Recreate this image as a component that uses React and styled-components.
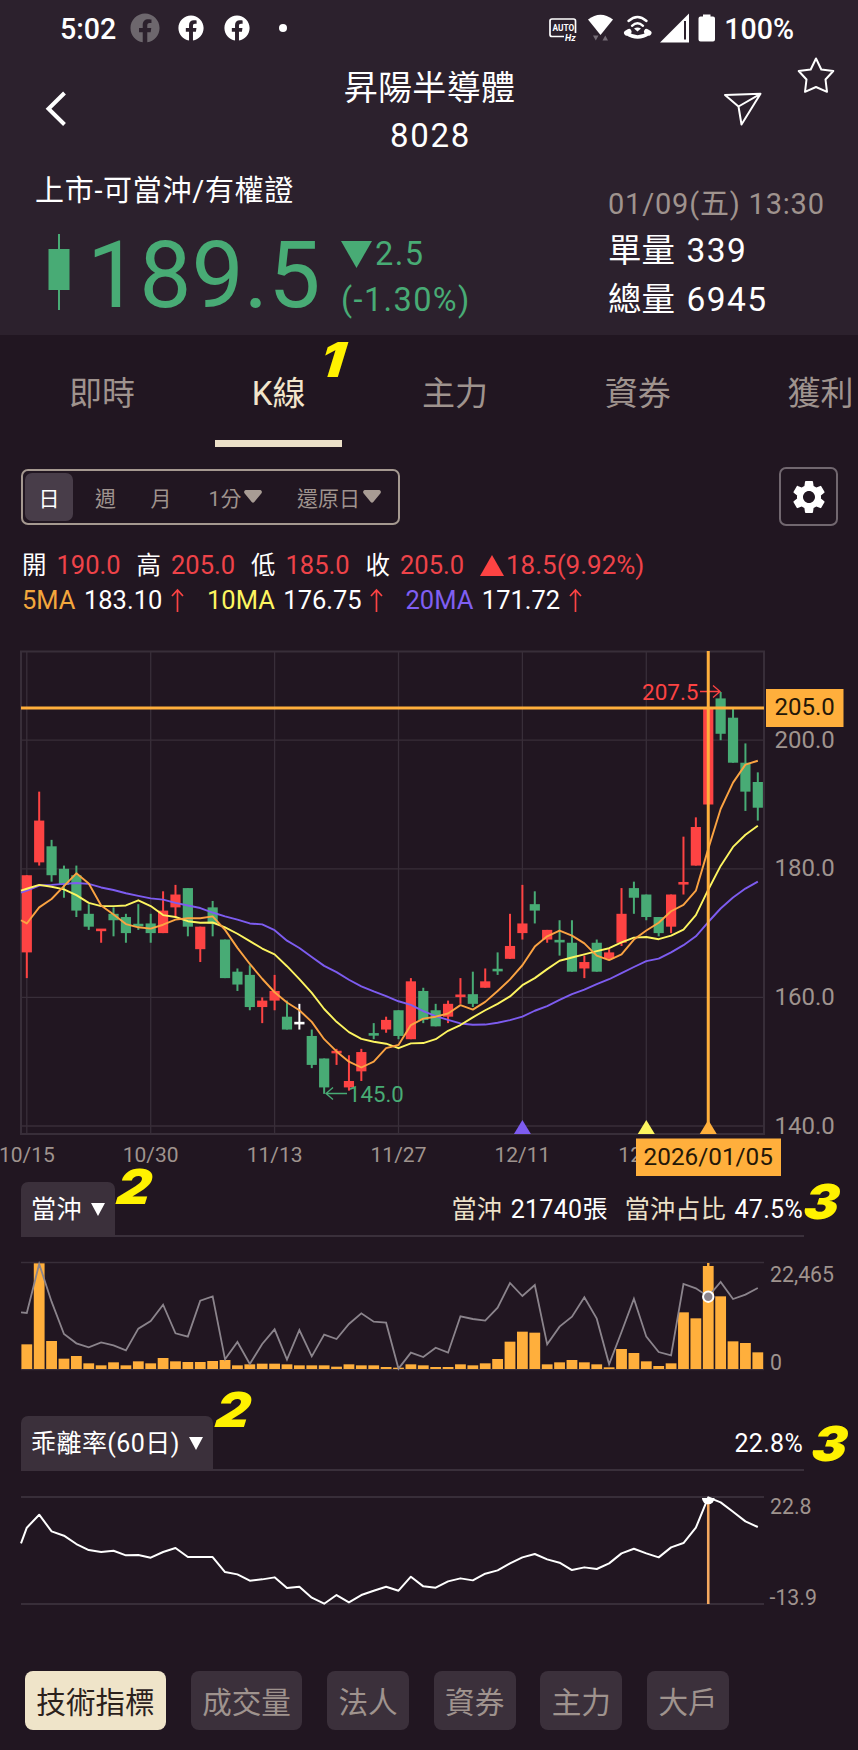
import styled, { createGlobalStyle } from "styled-components";
import { useState } from "react";
import { FaFacebook } from "react-icons/fa";
import { MdSettings } from "react-icons/md";

const RED = "#fd4343";
const GREEN = "#48ab75";
const ORANGE = "#ffaf3c";
const YELLOW = "#fdf560";
const PURPLE = "#7d5cf0";
const GREY = "#9f938e";

// [high, body top, body bottom, low, direction]
const CANDLES = [
    [179, 179, 167, 163, "r"], [192, 187.5, 181, 180.5, "r"], [184.5, 183.5, 179, 178, "g"],
    [180.5, 180, 177.5, 175.5, "g"], [180.5, 179, 173.5, 172.5, "g"], [174.5, 173, 171, 170.5, "g"],
    [170.5, 170.5, 170.5, 168.5, "r"], [174, 173, 172, 169.5, "g"], [173, 172.5, 170, 168.5, "g"],
    [174.5, 171.5, 171, 170.5, "g"], [173, 171.5, 170, 168.5, "g"], [176.5, 173.5, 170, 170, "r"],
    [177.5, 176, 174, 172.5, "r"], [177, 177, 171, 169.5, "g"], [171, 171, 167.5, 165.5, "r"],
    [175, 174, 171.5, 169.5, "g"], [169, 169, 163, 163, "g"], [164.5, 164, 162, 161, "g"],
    [165, 163.5, 158.5, 158, "g"], [160, 159.5, 158.5, 156, "r"], [163.5, 161, 159.5, 158, "r"],
    [159.5, 157, 155, 155, "g"], [159, 156, 156, 155, "w"], [155, 154, 149.5, 149, "g"],
    [150.5, 150.5, 146, 145, "g"], [152, 151.5, 151.5, 149.5, "r"], [151, 147, 146, 145.5, "r"],
    [152, 151.5, 148.5, 147, "r"], [156, 154.5, 154, 153.5, "g"], [157, 156.5, 155, 154.5, "r"],
    [158, 158, 154, 153.5, "g"], [163, 162.5, 153.5, 153.5, "r"], [161.5, 161, 156.5, 156, "g"],
    [159, 158, 155.5, 155.5, "g"], [159.5, 159, 157, 156, "r"], [163, 160.5, 160, 159, "r"],
    [164, 160.5, 159, 158.5, "g"], [164.5, 162.5, 161.5, 161.5, "r"], [167, 164.5, 164, 163.5, "g"],
    [173, 168, 166, 166, "r"], [177.5, 171.5, 170, 169, "r"], [176.5, 174.5, 173.5, 171.5, "g"],
    [170.5, 170.5, 169, 168.5, "r"], [172, 169, 168.5, 166.5, "g"], [172, 168.5, 164, 164, "g"],
    [166.5, 165.5, 164.5, 163, "r"], [169, 168.5, 164, 164, "g"], [167.5, 167, 166, 166, "r"],
    [177, 173, 168.5, 168, "r"], [178, 177, 175.5, 173, "g"], [176, 176, 172.5, 172, "g"],
    [172.5, 172.5, 170, 169.5, "g"], [176, 176, 171, 170, "r"], [185, 178, 177.5, 176, "r"],
    [188, 186.5, 180.5, 180.5, "r"], [205, 205, 190, 190, "r"], [207.5, 206.5, 201, 200, "g"],
    [205, 203.5, 196.5, 196.5, "g"], [199.5, 196.5, 192, 189, "g"], [195, 193.5, 189.5, 187.5, "g"],
];

// averages that depend on days before the first candle; entry 0 is the left edge
const MA5_START = [172, 171.5, 174, 175.3, 177.3];
const MA10_START = [176.6, 176.9, 177.5, 177.2, 176.8, 175.9, 174.7, 174.2, 174.2, 174.3];
const MA20_START = [
    176.3, 176.6, 177.4, 177.5, 177.65, 177.8, 177.65, 177.1, 176.7, 176.2, 175.8,
    175.4, 175.2, 174.7, 174.3, 173.9, 173.2, 172.6, 172.1, 171.5,
];

const DAY_TRADE = [
    74, 317, 84, 31, 39, 17, 11, 20, 11, 23, 17, 33, 23, 21, 21, 24, 27, 11, 14, 16,
    16, 14, 11, 11, 11, 7, 14, 11, 11, 6, 4, 14, 11, 6, 6, 14, 11, 17, 30, 82,
    112, 109, 14, 20, 27, 20, 14, 5, 60, 48, 23, 9, 17, 170, 152, 309, 218, 83, 78, 50,
];

const DAY_TRADE_RATIO = [
    170, 168, 315, 202, 105, 77, 65, 80, 71, 56, 121, 144, 193, 107, 97, 205, 218, 29, 81, 15, 75,
    119, 28, 117, 38, 103, 90, 135, 167, 142, 139, 1, 49, 36, 64, 49, 158, 150, 145, 184, 258,
    219, 252, 74, 127, 157, 215, 151, 14, 111, 211, 97, 51, 41, 255, 242, 217, 261, 210, 223, 243,
];

const BIAS = [
    181, 228, 267, 217, 204, 179, 161, 155, 159, 145, 146, 138, 155, 167, 140, 140, 140, 95, 88, 69, 73,
    79, 47, 51, 18, 0, 26, 4, 26, 39, 51, 39, 81, 52, 48, 67, 76, 70, 90, 100, 121,
    139, 149, 133, 123, 101, 109, 104, 121, 151, 165, 151, 139, 169, 182, 228, 319, 304, 276, 247, 230,
];

const LEFT = 21;
const RIGHT = 764;
const dayX = (i) => 26.8 + 12.39 * i;
const priceY = (p) => 100.2 + (200 - p) * 6.43;
const CURSOR = dayX(55);

const average = (days, start) => {
    const closes = CANDLES.map((c) => (c[4] === "r" ? c[1] : c[2]));
    const out = [...start];
    for (let i = days - 1; i < closes.length; i++) {
        out.push(closes.slice(i - days + 1, i + 1).reduce((a, b) => a + b, 0) / days);
    }
    return out;
};

const toPoints = (values, scale) =>
    values.map((v, i) => `${i === 0 ? LEFT : dayX(i - 1)},${scale(v)}`).join(" ");

const StatusIcons = () => (
    <svg width="170" height="34" viewBox="546 10 170 34" fill="#fff">
        <path d="M563 35.5H551a2 2 0 0 1-2-2V20a2 2 0 0 1 2-2h21.500a2 2 0 0 1 2 2v12" fill="none" stroke="#fff" strokeWidth="1.7" />
        <StatusText x="551.500" y="30" fontSize="8.300">AUTO</StatusText>
        <StatusText x="564" y="39.500" fontSize="9" fontStyle="italic">Hz</StatusText>
        <path d="M587 18.500q12.500-9.500 25 0L599.500 34z" />
        <path d="M592 34.500h5.500l-2.700 5zM601.500 39.500h5.500l-2.700-5z" fill="#756d76" />
        <g fill="none" stroke="#fff" strokeLinecap="round">
            <path d="M627.500 20q9-8 18 0M631 24.800q5.500-5 11 0" strokeWidth="2.400" />
            <path d="M625.500 32q11 8 22.500 0" strokeWidth="3.500" />
            <path d="M625.500 32l2.500-1.500M648 32l-2.500-1.500" strokeWidth="5" />
        </g>
        <path d="M633 27.500q3.500-2 7 0l-3.500 3z" />
        <path d="M659 41.500L688 12.500V41.500z" />
        <path d="M684 20v18.500" stroke="#2c212d" strokeWidth="2" />
        <path d="M702 13.500h7.500v2h2.500a2 2 0 0 1 2 2v21a2 2 0 0 1-2 2h-12.500a2 2 0 0 1-2-2v-21a2 2 0 0 1 2-2h2.500z" />
    </svg>
);

const PriceChart = () => (
    <Chart $height={542} viewBox="0 0 858 542">
        <g stroke="#382e39" strokeWidth="1.3" fill="none">
            {[0, 10, 20, 30, 40, 50].map((i) => <path key={i} d={`M${dayX(i)} 11V494`} />)}
            {[200, 180, 160, 140].map((p) => <path key={p} d={`M${LEFT} ${priceY(p)}H${RIGHT}`} />)}
            <rect x={LEFT} y="11.500" width={RIGHT - LEFT} height="482.500" strokeWidth="2" />
        </g>
        {CANDLES.map(([high, top, bottom, low, dir], i) => {
            const color = { r: RED, g: GREEN, w: "#fff" }[dir];
            const flat = top - bottom < 0.6;
            const middle = (priceY(top) + priceY(bottom)) / 2;
            return (
                <g key={i} fill={color}>
                    <rect x={dayX(i) - 1} y={priceY(high)} width="2" height={priceY(low) - priceY(high)} />
                    <rect
                        x={dayX(i) - 5.1}
                        y={flat ? middle - 1.3 : priceY(top)}
                        width="10.200"
                        height={flat ? 2.6 : priceY(bottom) - priceY(top)}
                    />
                </g>
            );
        })}
        <g fill="none" strokeWidth="1.900" strokeLinejoin="round">
            <polyline points={toPoints(average(20, MA20_START), priceY)} stroke={PURPLE} />
            <polyline points={toPoints(average(10, MA10_START), priceY)} stroke={YELLOW} />
            <polyline points={toPoints(average(5, MA5_START), priceY)} stroke="#fba342" />
        </g>
        <AxisText x="642" y="60" $size={22.5} $color={RED}>207.5</AxisText>
        <path d="M700 51.500h20m-7-6l7 6l-7 6" fill="none" stroke={RED} strokeWidth="1.300" />
        <AxisText x="348" y="462" $size={22.2} $color={GREEN}>145.0</AxisText>
        <path d="M347 453.500h-21m7-6l-7 6l7 6" fill="none" stroke={GREEN} strokeWidth="1.300" />
        <path d={`M${LEFT} 68H${RIGHT}`} stroke={ORANGE} strokeWidth="3" />
        <path d={`M${CURSOR} 11V494`} stroke={ORANGE} strokeWidth="3" />
        <path d={`M${dayX(40)} 480l8.500 14h-17z`} fill={PURPLE} />
        <path d={`M${dayX(50)} 480l8.500 14h-17z`} fill={YELLOW} />
        <path d={`M${CURSOR} 480l8.500 14h-17z`} fill={ORANGE} />
        {["10/15", "10/30", "11/13", "11/27", "12/11", "12/25"].map((d, i) => (
            <AxisText key={d} x={dayX(i * 10)} y="522" $size={21} textAnchor="middle">{d}</AxisText>
        ))}
        {[200, 180, 160, 140].map((p) => (
            <AxisText key={p} x="774.500" y={priceY(p) + 7.5} $size={24}>{p.toFixed(1)}</AxisText>
        ))}
        <rect x="766" y="49" width="77.500" height="38" fill={ORANGE} />
        <AxisText x="774.500" y="75" $size={24} $color="#241708">205.0</AxisText>
        <rect x="636" y="498.500" width="145" height="37.500" fill={ORANGE} />
        <AxisText x={CURSOR} y="525" $size={24.3} $color="#241708" textAnchor="middle">2026/01/05</AxisText>
    </Chart>
);

const DayTradeChart = () => (
    <Chart $height={153} viewBox="0 0 858 153">
        <path d={`M${LEFT} 25.500H${RIGHT}M${LEFT} 132.500H${RIGHT}`} stroke="#382e39" strokeWidth="1.600" />
        <g fill={ORANGE}>
            {DAY_TRADE.map((v, i) => (
                <rect key={i} x={dayX(i) - 5.4} y={132 - v / 3} width="10.800" height={v / 3} />
            ))}
            <rect x={CURSOR - 1.2} y="26" width="2.400" height="5" />
        </g>
        <polyline
            points={toPoints(DAY_TRADE_RATIO, (v) => 132 - v / 3)}
            fill="none"
            stroke="#8b848c"
            strokeWidth="1.800"
        />
        <circle cx={CURSOR} cy="59.700" r="5.200" fill="#8b848c" stroke="#fff" strokeWidth="2" />
        <AxisText x="770" y="44.500" $size={21.3}>22,465</AxisText>
        <AxisText x="770" y="133" $size={21.3}>0</AxisText>
    </Chart>
);

const BiasChart = () => (
    <Chart $height={153} viewBox="0 0 858 153">
        <path d={`M${LEFT} 26H${RIGHT}M${LEFT} 133H${RIGHT}`} stroke="#382e39" strokeWidth="1.800" />
        <path d={`M${CURSOR} 27V133`} stroke="#f5a85f" strokeWidth="2.600" />
        <polyline
            points={toPoints(BIAS, (v) => 132.7 - v / 3)}
            fill="none"
            stroke="#fff"
            strokeWidth="2"
            strokeLinejoin="round"
        />
        <path d={`M${CURSOR - 6.3} 27h12.600a6.300 6.300 0 0 1-12.600 0z`} fill="#fff" />
        <AxisText x="770" y="42.500" $size={21.3}>22.8</AxisText>
        <AxisText x="769.500" y="133.500" $size={21.3}>-13.9</AxisText>
    </Chart>
);

const App = () => {
    const [tab, setTab] = useState("K線");
    const [period, setPeriod] = useState("日");
    const [indicator, setIndicator] = useState("技術指標");

    return (
        <Page>
            <GlobalStyle />
            <Header>
                <StatusBar>
                    <Clock>5:02</Clock>
                    <Notices>
                        <FaFacebook size={30} color="#6d676d" />
                        <FaFacebook size={26} />
                        <FaFacebook size={26} />
                        <Dot />
                    </Notices>
                    <StatusRight>
                        <StatusIcons />
                        <Clock>100%</Clock>
                    </StatusRight>
                </StatusBar>
                <TitleBar>
                    <BackButton aria-label="back">
                        <svg width="22" height="36" viewBox="0 0 22 36" fill="none" stroke="#fff" strokeWidth="4">
                            <path d="M19.500 2L3.500 17.700L19.500 33.500" />
                        </svg>
                    </BackButton>
                    <Title>
                        <h1>昇陽半導體</h1>
                        <p>8028</p>
                    </Title>
                    <Actions>
                        <svg width="40" height="36" viewBox="0 0 40 36" fill="none" stroke="#fff" strokeWidth="2" strokeLinejoin="round">
                            <path d="M2 3L37.500 1.800L18.500 32.500L15.500 14.500zM15.500 14.500L37.500 1.800" />
                        </svg>
                        <Star width="38" height="38" viewBox="0 0 38 38" fill="none" stroke="#fff" strokeWidth="2" strokeLinejoin="round">
                            <path d="M19 2.500L24.300 13.500L36.300 15L28.500 23.500L30 35.800L19 31L8 35.800L9.500 23.500L1.700 15L13.700 13.500z" />
                        </Star>
                    </Actions>
                </TitleBar>
                <Quote>
                    <QuoteMain>
                        <Market>上市-可當沖/有權證</Market>
                        <PriceRow>
                            <svg width="22" height="78" viewBox="0 0 22 78" fill={GREEN}>
                                <path d="M10 0h2v15h9.500v41H12v20h-2V56H.500V15H10z" />
                            </svg>
                            <Price>189.5</Price>
                            <Change>
                                <div>
                                    <svg width="31" height="27" viewBox="0 0 31 27" fill={GREEN}>
                                        <path d="M0 0h31L15.500 27z" />
                                    </svg>
                                    2.5
                                </div>
                                <div>(-1.30%)</div>
                            </Change>
                        </PriceRow>
                    </QuoteMain>
                    <QuoteSide>
                        <QuoteTime>01/09(五) 13:30</QuoteTime>
                        <Volume>單量<span>339</span></Volume>
                        <Volume>總量<span>6945</span></Volume>
                    </QuoteSide>
                </Quote>
            </Header>

            <Tabs>
                {["即時", "K線", "主力", "資券", "獲利"].map((name) => (
                    <Tab key={name} $active={tab === name} onClick={() => setTab(name)}>{name}</Tab>
                ))}
                <Mark $x={322} $y={7}>1</Mark>
            </Tabs>

            <Toolbar>
                <Periods>
                    {[["日", 48], ["週", 65], ["月", 46], ["1分", 103, true], ["還原日", 104, true]].map(([name, width, menu]) => (
                        <Period key={name} $width={width} $active={period === name} onClick={() => setPeriod(name)}>
                            {name}
                            {menu && (
                                <svg width="18" height="13" viewBox="0 0 18 13" fill="#a89c94">
                                    <path d="M2 0h14a2 2 0 0 1 1.500 3.200L10.300 12a1.700 1.700 0 0 1-2.600 0L.500 3.200A2 2 0 0 1 2 0z" />
                                </svg>
                            )}
                        </Period>
                    ))}
                </Periods>
                <Settings aria-label="settings">
                    <MdSettings size={40} />
                </Settings>
            </Toolbar>

            <Prices>
                {[["開", "190.0"], ["高", "205.0"], ["低", "185.0"], ["收", "205.0"]].map(([label, value]) => (
                    <PriceItem key={label}>{label}<b>{value}</b></PriceItem>
                ))}
                <Gain>
                    <svg width="24" height="21" viewBox="0 0 24 21" fill={RED}><path d="M12 0l12 21H0z" /></svg>
                    18.5(9.92%)
                </Gain>
            </Prices>
            <Averages>
                {[["5MA", "183.10", "#f3a73d", 185], ["10MA", "176.75", YELLOW, 198.5], ["20MA", "171.72", "#7f5ff2", 198]].map(([label, value, color, width]) => (
                    <AverageItem key={label} $color={color} $width={width}>
                        <b>{label}</b>
                        {value}
                        <svg width="13" height="24" viewBox="0 0 13 24" fill="none" stroke={RED} strokeWidth="1.700">
                            <path d="M6.500 24V2M1 8l5.500-6L12 8" />
                        </svg>
                    </AverageItem>
                ))}
            </Averages>

            <PriceChart />

            <PanelHead>
                <PanelTab>當沖<Triangle /></PanelTab>
                <PanelValue>
                    <em>當沖</em> 21740張<Space /><em>當沖占比</em> 47.5%
                </PanelValue>
                <Mark $x={119} $y={-13}>2</Mark>
                <Mark $x={806} $y={2}>3</Mark>
            </PanelHead>
            <DayTradeChart />

            <PanelHead $top={26}>
                <PanelTab>乖離率(60日)<Triangle /></PanelTab>
                <PanelValue>22.8%</PanelValue>
                <Mark $x={218} $y={-24}>2</Mark>
                <Mark $x={814} $y={10}>3</Mark>
            </PanelHead>
            <BiasChart />

            <Indicators>
                {["技術指標", "成交量", "法人", "資券", "主力", "大戶"].map((name) => (
                    <IndicatorButton key={name} $active={indicator === name} onClick={() => setIndicator(name)}>
                        {name}
                    </IndicatorButton>
                ))}
            </Indicators>
        </Page>
    );
};

const GlobalStyle = createGlobalStyle`
    * {
        box-sizing: border-box;
    }
    body {
        margin: 0;
        background: #211621;
    }
    h1, p {
        margin: 0;
        font-weight: 400;
    }
    svg {
        display: block;
        flex-shrink: 0;
    }
    button {
        padding: 0;
        border: none;
        background: none;
        font: inherit;
        color: inherit;
        white-space: nowrap;
    }
`;

const Page = styled.div`
    width: 858px;
    height: 1750px;
    overflow: hidden;
    background: #211621;
    color: #fff;
    font-family: Roboto, "Noto Sans CJK TC", sans-serif;
`;

const Header = styled.header`
    height: 335px;
    background: #2c212d;
`;

const StatusBar = styled.div`
    display: flex;
    align-items: center;
    height: 56px;
    padding: 0 64px 0 60px;
`;

const Clock = styled.span`
    font-size: 28.600px;
    font-weight: 500;
    line-height: 56px;
    padding-top: 1px;
`;

const Notices = styled.div`
    display: flex;
    align-items: center;
    gap: 20px;
    margin-left: 14px;

    svg:first-child {
        margin-right: -2px;
    }
`;

const Dot = styled.i`
    width: 8px;
    height: 8px;
    margin-left: 9px;
    border-radius: 50%;
    background: #fff;
`;

const StatusRight = styled.div`
    display: flex;
    align-items: center;
    gap: 7px;
    margin-left: auto;
`;

const StatusText = styled.text`
    font-family: Roboto, sans-serif;
    font-weight: 700;
`;

const TitleBar = styled.div`
    display: grid;
    grid-template-columns: 190px 1fr 190px;
    height: 104px;
`;

const BackButton = styled.button`
    justify-self: start;
    align-self: start;
    margin: 35px 0 0 45px;
`;

const Title = styled.div`
    text-align: center;
    font-size: 33px;
    padding-top: 8px;

    h1 {
        font-size: 34px;
        line-height: 48px;
        letter-spacing: 0.300px;
        padding-left: 1px;
    }
    p {
        line-height: 47px;
        letter-spacing: 1.700px;
        padding-left: 3px;
    }
`;

const Actions = styled.div`
    display: flex;
    align-items: flex-start;
    justify-content: flex-end;
    gap: 34px;
    padding: 36px 23px 0 0;
`;

const Star = styled.svg`
    margin-top: -36px;
`;

const Quote = styled.div`
    display: grid;
    grid-template-columns: 608px 1fr;
`;

const QuoteMain = styled.div`
    padding-left: 35px;
`;

const Market = styled.p`
    padding-top: 9px;
    font-size: 29px;
    line-height: 44px;
    letter-spacing: 0.700px;
`;

const PriceRow = styled.div`
    display: flex;
    padding: 21px 0 0 13px;
    color: ${GREEN};
`;

const Price = styled.strong`
    width: 249px;
    margin-left: 17px;
    font-size: 93px;
    font-weight: 400;
    line-height: 84px;
`;

const Change = styled.div`
    margin-left: 5px;
    font-size: 32.500px;
    letter-spacing: 1.400px;
    line-height: 46px;

    div {
        display: flex;
        align-items: center;
        gap: 3px;
        height: 46px;
        white-space: nowrap;
    }
    div:first-child {
        margin-top: -3px;
    }
`;

const QuoteSide = styled.div`
    padding-top: 20px;
`;

const QuoteTime = styled.p`
    color: ${GREY};
    font-size: 29px;
    line-height: 49px;
    letter-spacing: 0.800px;
`;

const Volume = styled.p`
    height: 49px;
    font-size: 33.500px;
    line-height: 44px;
    white-space: nowrap;

    span {
        margin-left: 11.500px;
        letter-spacing: 1.400px;
    }
`;

// hand-written numbers laid over the screen
const Mark = styled.span`
    position: absolute;
    left: ${(props) => props.$x}px;
    top: ${(props) => props.$y}px;
    color: #fff200;
    font-family: Inter, Roboto, sans-serif;
    font-size: 48px;
    font-style: italic;
    font-weight: 900;
    line-height: 36px;
    transform: skewX(-7deg) scaleX(1.1);
`;

const Tabs = styled.nav`
    position: relative;
    display: flex;
    gap: 42.700px;
    height: 112px;
    padding-left: 32px;
`;

const Tab = styled.button`
    flex-shrink: 0;
    height: 112px;
    padding: 6px 37px 0;
    border-bottom: 7px solid ${(props) => (props.$active ? "#ece0c8" : "transparent")};
    color: ${(props) => (props.$active ? "#f1e5cc" : GREY)};
    font-size: 33px;
`;

const Toolbar = styled.div`
    display: flex;
    align-items: center;
    justify-content: space-between;
    padding: 20px 20px 0 21px;
`;

const Periods = styled.div`
    display: flex;
    width: 379px;
    height: 56px;
    padding: 2px;
    border: 2px solid #a59990;
    border-radius: 7px;
`;

const Period = styled.button`
    display: flex;
    align-items: center;
    justify-content: center;
    gap: 3px;
    width: ${(props) => props.$width}px;
    height: 48px;
    border-radius: 7px;
    background: ${(props) => (props.$active ? "#483d49" : "transparent")};
    color: ${(props) => (props.$active ? "#fff" : GREY)};
    font-size: 21px;
`;

const Settings = styled.button`
    display: flex;
    align-items: center;
    justify-content: center;
    width: 59px;
    height: 59px;
    border: 2px solid #71676f;
    border-radius: 7px;
    color: #fff;
`;

const Prices = styled.div`
    display: flex;
    align-items: center;
    height: 34px;
    margin-top: 22px;
    padding-left: 22px;
    font-size: 26px;
    line-height: 34px;
`;

const PriceItem = styled.span`
    display: flex;
    align-items: baseline;
    gap: 10px;
    width: 114.500px;
    font-size: 24.500px;

    b {
        color: #ef4349;
        font-size: 25.500px;
        font-weight: 400;
    }
`;

const Gain = styled.span`
    display: flex;
    align-items: center;
    gap: 2px;
    color: #ef4349;
`;

const Averages = styled.div`
    display: flex;
    align-items: center;
    height: 34px;
    margin: 1px 0 23px;
    padding-left: 22px;
    font-size: 25.500px;
`;

const AverageItem = styled.span`
    display: flex;
    align-items: center;
    gap: 8.500px;
    width: ${(props) => props.$width}px;

    b {
        color: ${(props) => props.$color};
        font-weight: 400;
    }
`;

const Chart = styled.svg`
    width: 858px;
    height: ${(props) => props.$height}px;
`;

const AxisText = styled.text`
    fill: ${(props) => props.$color || GREY};
    font-family: Roboto, sans-serif;
    font-size: ${(props) => props.$size}px;
`;

const PanelHead = styled.div`
    position: relative;
    display: flex;
    justify-content: space-between;
    height: 55px;
    margin: ${(props) => props.$top || 0}px 54px 0 0;
    padding-left: 21px;
    background: linear-gradient(#3a303b, #3a303b) 21px 100% / 783px 2px no-repeat;
    font-size: 25px;
    line-height: 56px;
`;

const PanelTab = styled.button`
    display: flex;
    align-items: center;
    gap: 9px;
    height: 55px;
    padding: 0 10px;
    border-radius: 7px 7px 0 0;
    background: #3b303b;
    letter-spacing: 0.450px;
`;

const Triangle = styled.i`
    border: solid transparent;
    border-width: 13px 7px 0;
    border-top-color: #fff;
`;

const PanelValue = styled.div`
    padding-right: 1px;
    white-space: nowrap;
    letter-spacing: 0.300px;

    em {
        color: #ece0c8;
        font-style: normal;
        margin-right: 2px;
    }
`;

const Space = styled.span`
    display: inline-block;
    width: 17px;
`;

const Indicators = styled.div`
    display: flex;
    gap: 24.900px;
    padding: 47px 0 0 25px;
`;

const IndicatorButton = styled.button`
    height: 59px;
    padding: 0 11.300px;
    border-radius: 8px;
    background: ${(props) => (props.$active ? "#efe4c9" : "#3b303b")};
    color: ${(props) => (props.$active ? "#2b211c" : GREY)};
    font-size: 29.600px;
`;

export default App;
